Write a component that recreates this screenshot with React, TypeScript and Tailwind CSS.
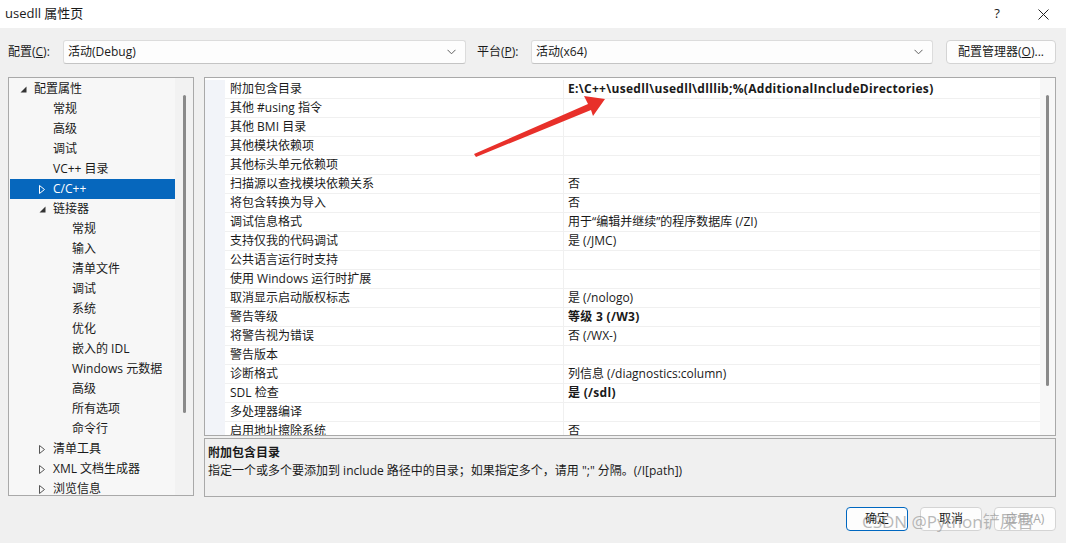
import React from "react";

const FONT = {
  fontFamily: '"Open Sans", "Noto Sans CJK SC", sans-serif',
};

type TreeItem = {
  label: string;
  level: 0 | 1 | 2;
  toggle?: "open" | "closed";
  selected?: boolean;
};

const treeItems: TreeItem[] = [
  { label: "配置属性", level: 0, toggle: "open" },
  { label: "常规", level: 1 },
  { label: "高级", level: 1 },
  { label: "调试", level: 1 },
  { label: "VC++ 目录", level: 1 },
  { label: "C/C++", level: 1, toggle: "closed", selected: true },
  { label: "链接器", level: 1, toggle: "open" },
  { label: "常规", level: 2 },
  { label: "输入", level: 2 },
  { label: "清单文件", level: 2 },
  { label: "调试", level: 2 },
  { label: "系统", level: 2 },
  { label: "优化", level: 2 },
  { label: "嵌入的 IDL", level: 2 },
  { label: "Windows 元数据", level: 2 },
  { label: "高级", level: 2 },
  { label: "所有选项", level: 2 },
  { label: "命令行", level: 2 },
  { label: "清单工具", level: 1, toggle: "closed" },
  { label: "XML 文档生成器", level: 1, toggle: "closed" },
  { label: "浏览信息", level: 1, toggle: "closed" },
];

const props: { name: string; value?: string; bold?: boolean }[] = [
  { name: "附加包含目录", value: "E:\\C++\\usedll\\usedll\\dlllib;%(AdditionalIncludeDirectories)", bold: true },
  { name: "其他 #using 指令" },
  { name: "其他 BMI 目录" },
  { name: "其他模块依赖项" },
  { name: "其他标头单元依赖项" },
  { name: "扫描源以查找模块依赖关系", value: "否" },
  { name: "将包含转换为导入", value: "否" },
  { name: "调试信息格式", value: "用于“编辑并继续”的程序数据库 (/ZI)" },
  { name: "支持仅我的代码调试", value: "是 (/JMC)" },
  { name: "公共语言运行时支持" },
  { name: "使用 Windows 运行时扩展" },
  { name: "取消显示启动版权标志", value: "是 (/nologo)" },
  { name: "警告等级", value: "等级 3 (/W3)", bold: true },
  { name: "将警告视为错误", value: "否 (/WX-)" },
  { name: "警告版本" },
  { name: "诊断格式", value: "列信息 (/diagnostics:column)" },
  { name: "SDL 检查", value: "是 (/sdl)", bold: true },
  { name: "多处理器编译" },
  { name: "启用地址擦除系统", value: "否" },
];

function Chevron() {
  return (
    <svg width="9" height="6" viewBox="0 0 9 6" className="shrink-0">
      <polyline points="0.5,0.8 4.5,4.8 8.5,0.8" fill="none" stroke="#606060" strokeWidth="1" />
    </svg>
  );
}

function Combo({ text, width }: { text: string; width: string }) {
  return (
    <div
      className={`${width} h-[24px] flex items-center justify-between pl-[4px] pr-[9px] bg-[#fdfdfd] border border-[#dcdcdc] border-b-[#c4c4c4] rounded-[3px]`}
    >
      <span>{text}</span>
      <Chevron />
    </div>
  );
}

function Toggle({ kind, selected }: { kind: "open" | "closed"; selected?: boolean }) {
  if (kind === "open") {
    return (
      <svg width="7" height="7" viewBox="0 0 7 7">
        <polygon points="6.5,0.5 6.5,6.5 0.5,6.5" fill="#333" />
      </svg>
    );
  }
  return (
    <svg width="6" height="9" viewBox="0 0 6 9">
      <polygon points="0.5,0.5 5.5,4.5 0.5,8.5" fill="none" stroke={selected ? "#ffffff" : "#555"} strokeWidth="1" />
    </svg>
  );
}

function TreeRow({ item }: { item: TreeItem }) {
  const indent = item.level === 0 ? "pl-[10px]" : item.level === 1 ? "pl-[29px]" : "pl-[48px]";
  return (
    <div
      className={`h-[20px] shrink-0 flex items-center ${indent} ${
        item.selected ? "bg-[#0667bd] text-white" : "text-[#1a1a1a]"
      }`}
    >
      <div className="w-[14px] flex justify-start items-center">
        {item.toggle && <Toggle kind={item.toggle} selected={item.selected} />}
      </div>
      <span className="whitespace-nowrap">{item.label}</span>
    </div>
  );
}

function Button({ label, primary, disabled }: { label: string; primary?: boolean; disabled?: boolean }) {
  return (
    <div
      className={`w-[62px] h-[24px] flex items-center justify-center rounded-[4px] bg-[#fdfdfd] border ${
        primary ? "border-[#0067c0] border-[1.5px]" : "border-[#d4d4d4]"
      } ${disabled ? "text-[#a8a8a8]" : "text-[#1a1a1a]"}`}
    >
      {label}
    </div>
  );
}

export default function App() {
  return (
    <div
      className="relative w-[1066px] h-[543px] overflow-hidden bg-[#f0f0f0] text-[12px] text-[#1a1a1a]"
      style={FONT}
    >
      {/* Title bar */}
      <div className="h-[28px] bg-white flex items-center justify-between pl-[5px]">
        <span className="text-[13px]">usedll 属性页</span>
        <div className="flex items-center">
          <span className="w-[46px] text-center text-[13px]">?</span>
          <div className="w-[46px] flex justify-center">
            <svg width="11" height="11" viewBox="0 0 11 11">
              <path d="M0.5 0.5 L10.5 10.5 M10.5 0.5 L0.5 10.5" stroke="#222" strokeWidth="1" />
            </svg>
          </div>
        </div>
      </div>

      {/* Configuration row */}
      <div className="mt-[12px] h-[24px] flex items-center pl-[8px]">
        <span className="w-[55px]">
          配置(<span className="underline">C</span>):
        </span>
        <Combo text="活动(Debug)" width="w-[403px]" />
        <span className="ml-[11px] w-[54px]">
          平台(<span className="underline">P</span>):
        </span>
        <Combo text="活动(x64)" width="w-[402px]" />
        <div className="ml-[13px] w-[110px] h-[24px] flex items-center justify-center bg-[#fdfdfd] border border-[#d4d4d4] rounded-[4px]">
          配置管理器(<span className="underline">O</span>)...
        </div>
      </div>

      {/* Panels */}
      <div className="mt-[13px] flex pl-[8px]">
        {/* Tree */}
        <div className="w-[186px] h-[419px] border border-[#a9a9a9] bg-[#f7f7f7] flex overflow-hidden">
          <div className="w-[166px] pl-[1px] pt-[1px] flex flex-col">
            {treeItems.map((item, i) => (
              <TreeRow key={i} item={item} />
            ))}
          </div>
          <div className="flex-1 bg-[#f2f2f2] flex justify-center pt-[17px]">
            <div className="w-[3px] h-[318px] rounded-full bg-[#8a8a8a]" />
          </div>
        </div>

        {/* Right column */}
        <div className="ml-[10px] w-[852px] flex flex-col gap-[2px]">
          {/* Property grid */}
          <div className="h-[359px] border border-[#a9a9a9] bg-white flex overflow-hidden">
            <div className="flex-1 pt-[2px] flex flex-col">
              {props.map((p, i) => (
                <div key={i} className="h-[19px] shrink-0 flex">
                  <div className="w-[20px] bg-[#f2f4f9]" />
                  <div className="w-[338px] pl-[5px] flex items-center border-b border-[#f0f0f0] whitespace-nowrap">
                    {p.name}
                  </div>
                  <div
                    className={`flex-1 pl-[4px] flex items-center border-b border-l border-[#f0f0f0] whitespace-nowrap ${
                      p.bold ? "font-bold tracking-[0.3px]" : ""
                    }`}
                  >
                    {p.value}
                  </div>
                </div>
              ))}
            </div>
            <div className="w-[15px] bg-[#f7f7f7] flex justify-center pt-[17px]">
              <div className="w-[3px] h-[291px] rounded-full bg-[#8a8a8a]" />
            </div>
          </div>

          {/* Description */}
          <div className="h-[59px] border border-[#a9a9a9] bg-[#f0f0f0] pl-[3px] pt-[5px] flex flex-col gap-[1px]">
            <span className="font-bold leading-[17px]">附加包含目录</span>
            <span className="leading-[17px]">
              指定一个或多个要添加到 include 路径中的目录；如果指定多个，请用 ";" 分隔。(/I[path])
            </span>
          </div>
        </div>
      </div>

      {/* Buttons */}
      <div className="mt-[10px] flex justify-end gap-[12px] pr-[10px]">
        <Button label="确定" primary />
        <Button label="取消" />
        <Button label="应用(A)" disabled />
      </div>

      {/* Watermark */}
      <div className="absolute left-[862px] top-[509px] text-[17px] text-[#9a9a9a]/70 whitespace-nowrap pointer-events-none">
        CSDN @Python铲屎官
      </div>

      {/* Red annotation arrow */}
      <svg className="absolute left-0 top-0 pointer-events-none" width="1066" height="543">
        <polygon
          points="474,154 476,157 591,110 593,116 605,99 584,96 588,104"
          fill="#e8302a"
        />
      </svg>
    </div>
  );
}
